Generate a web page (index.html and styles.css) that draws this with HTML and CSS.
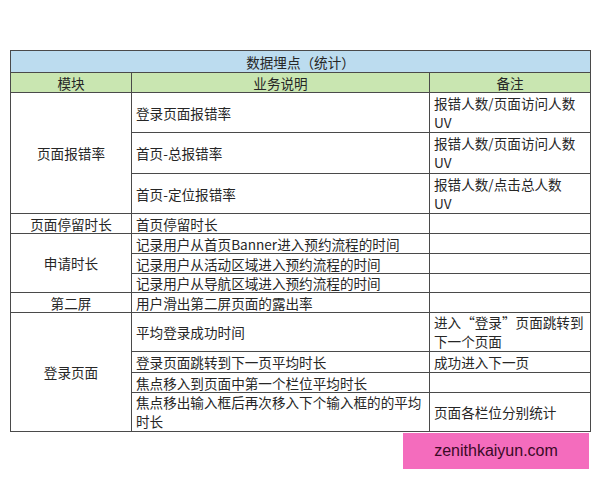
FILE: index.html
```
<!DOCTYPE html>
<html lang="zh">
<head>
<meta charset="utf-8">
<link rel="stylesheet" href="styles.css">
</head>
<body>
<div class="page">
<table class="sheet">
  <colgroup><col class="c1"><col class="c2"><col class="c3"></colgroup>
  <tr class="title h22"><td colspan="3">数据埋点（统计）</td></tr>
  <tr class="head h20"><td>模块</td><td>业务说明</td><td>备注</td></tr>
  <tr class="h40"><td rowspan="3" class="mod">页面报错率</td><td>登录页面报错率</td><td class="note">报错人数/页面访问人数<br>UV</td></tr>
  <tr class="h41"><td>首页-总报错率</td><td class="note">报错人数/页面访问人数<br>UV</td></tr>
  <tr class="h40"><td>首页-定位报错率</td><td class="note">报错人数/点击总人数<br>UV</td></tr>
  <tr class="h20"><td class="mod">页面停留时长</td><td>首页停留时长</td><td></td></tr>
  <tr class="h20"><td rowspan="3" class="mod">申请时长</td><td>记录用户从首页Banner进入预约流程的时间</td><td></td></tr>
  <tr class="h20"><td>记录用户从活动区域进入预约流程的时间</td><td></td></tr>
  <tr class="h19"><td>记录用户从导航区域进入预约流程的时间</td><td></td></tr>
  <tr class="h20"><td class="mod">第二屏</td><td>用户滑出第二屏页面的露出率</td><td></td></tr>
  <tr class="h39"><td rowspan="4" class="mod">登录页面</td><td>平均登录成功时间</td><td class="note">进入“登录”页面跳转到<br>下一个页面</td></tr>
  <tr class="h21"><td>登录页面跳转到下一页平均时长</td><td>成功进入下一页</td></tr>
  <tr class="h20"><td>焦点移入到页面中第一个栏位平均时长</td><td></td></tr>
  <tr class="h39"><td class="note">焦点移出输入框后再次移入下个输入框的的平均<br>时长</td><td>页面各栏位分别统计</td></tr>
</table>
<div class="mark">zenithkaiyun.com</div>
</div>
</body>
</html>
```
FILE: styles.css
```
html, body {
  margin: 0;
  padding: 0;
  background: #ffffff;
}
.page {
  position: relative;
  width: 600px;
  height: 480px;
  padding-top: 50px;
  box-sizing: border-box;
}
.sheet {
  margin-left: 10px;
  width: 580px;
  border-collapse: collapse;
  table-layout: fixed;
  font-family: "Noto Sans CJK SC", "Microsoft YaHei", sans-serif;
  font-size: 13.6px;
  line-height: 18px;
  color: #262626;
}
.c1 { width: 121px; }
.c2 { width: 298px; }
.c3 { width: 161px; }
.sheet td {
  border: 1px solid #4a4a4a;
  padding: 0 0 0 4px;
  vertical-align: middle;
  white-space: nowrap;
  overflow: hidden;
}
.sheet td.note { line-height: 19px; }
.sheet td.mod,
.title td,
.head td {
  text-align: center;
  padding: 0;
}
.title td { background: #bcdcef; }
.head td { background: #c9e6b1; }
.h19 { height: 19px; }
.h20 { height: 20px; }
.h21 { height: 21px; }
.h22 { height: 22px; }
.h39 { height: 39px; }
.h40 { height: 40px; }
.h41 { height: 41px; }
.mark {
  position: absolute;
  left: 403px;
  top: 433px;
  width: 186px;
  height: 36px;
  background: #f46cbd;
  color: #3a0a26;
  font-family: "Liberation Sans", Arial, sans-serif;
  font-size: 16px;
  display: flex;
  align-items: center;
  justify-content: center;
}
```
